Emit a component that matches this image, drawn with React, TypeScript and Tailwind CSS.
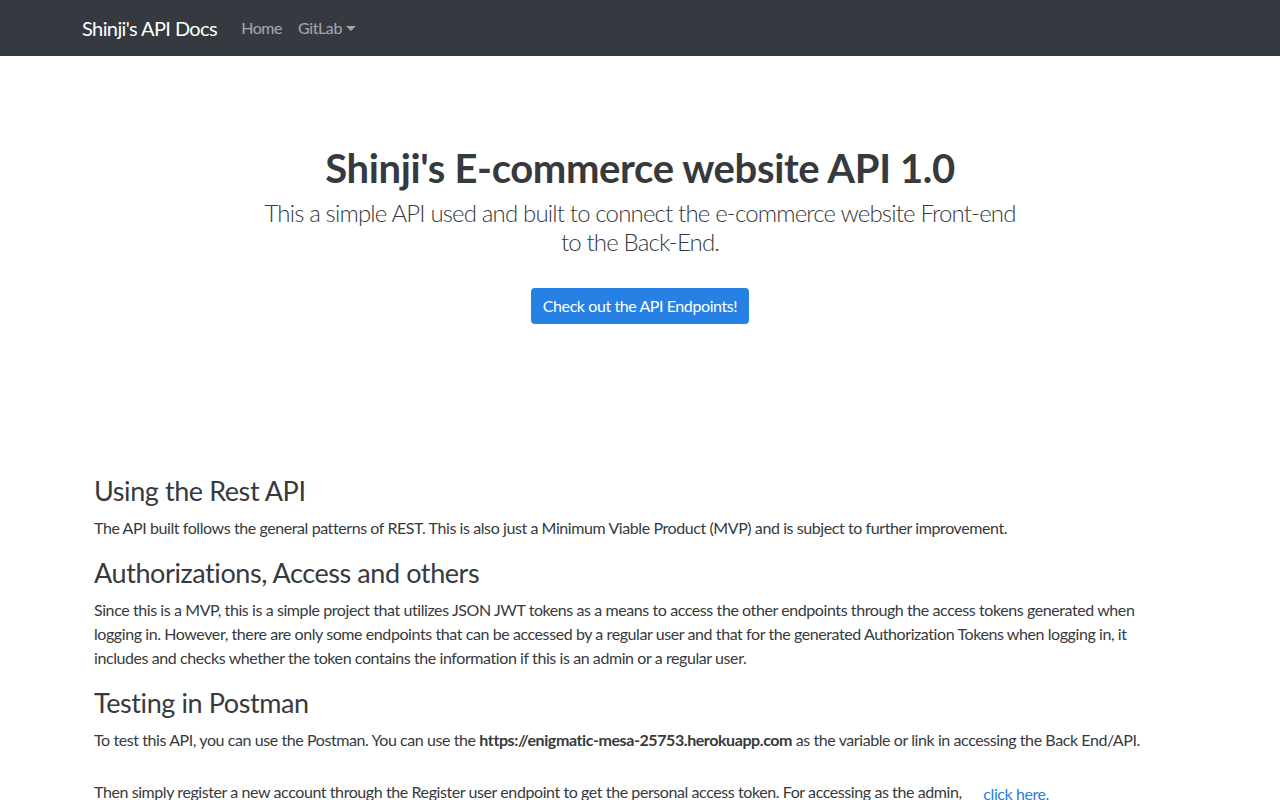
export default function App() {
  return (
    <div className="min-h-[800px] bg-white font-[Lato,'Liberation_Sans',sans-serif] text-[#373a3c] tracking-[-0.026em]">
      <nav className="h-14 bg-[#343a40]">
        <div className="mx-auto flex h-full w-[1140px] items-center px-3">
          <a className="mr-4 text-[20px] leading-[30px] tracking-[-0.03em] text-white">Shinji's API Docs</a>
          <ul className="flex items-center text-[16px] leading-6 text-white/55">
            <li className="px-2">Home</li>
            <li className="flex items-center px-2">
              GitLab
              <span className="ml-[4px] mt-[1px] h-0 w-0 border-x-[5px] border-t-[5px] border-x-transparent border-t-white/55"></span>
            </li>
          </ul>
        </div>
      </nav>

      <header className="flex flex-col items-center pt-[88px] text-center">
        <h1 className="text-[40px] font-bold leading-[48px] tracking-[-0.009em]">Shinji's E-commerce website API 1.0</h1>
        <p className="mt-[6px] w-[764px] text-[24px] font-light leading-[29px] tracking-[-0.035em]">
          This a simple API used and built to connect the e-commerce website Front&#8209;end to the Back-End.
        </p>
        <button className="mt-8 h-9 rounded-[4px] bg-[#2780e3] px-3 text-[16px] leading-6 text-white">
          Check out the API Endpoints!
        </button>
      </header>

      <main className="mx-auto mt-[150px] w-[1092px] pr-[10px] text-[16px] leading-6">
        <h2 className="mb-2 text-[27px] leading-[34px]">Using the Rest API</h2>
        <p className="mb-4">
          The API built follows the general patterns of REST. This is also just a Minimum Viable Product (MVP) and is subject to further improvement.
        </p>
        <h2 className="mb-2 text-[27px] leading-[34px]">Authorizations, Access and others</h2>
        <p className="mb-4">
          Since this is a MVP, this is a simple project that utilizes JSON JWT tokens as a means to access the other endpoints through the access tokens generated when logging in. However, there are only some endpoints that can be accessed by a regular user and that for the generated Authorization Tokens when logging in, it includes and checks whether the token contains the information if this is an admin or a regular user.
        </p>
        <h2 className="mb-2 text-[27px] leading-[34px]">Testing in Postman</h2>
        <p className="mb-4">
          To test this API, you can use the Postman. You can use the <b className="font-bold">https://enigmatic-mesa-25753.herokuapp.com</b> as the variable or link in accessing the Back End/API.
        </p>
        <p className="mt-[28px]">
          Then simply register a new account through the Register user endpoint to get the personal access token. For accessing as the admin,{" "}
          <a className="ml-[18px] align-[-2px] text-[#2780e3]">click here.</a>
        </p>
      </main>
    </div>
  );
}
